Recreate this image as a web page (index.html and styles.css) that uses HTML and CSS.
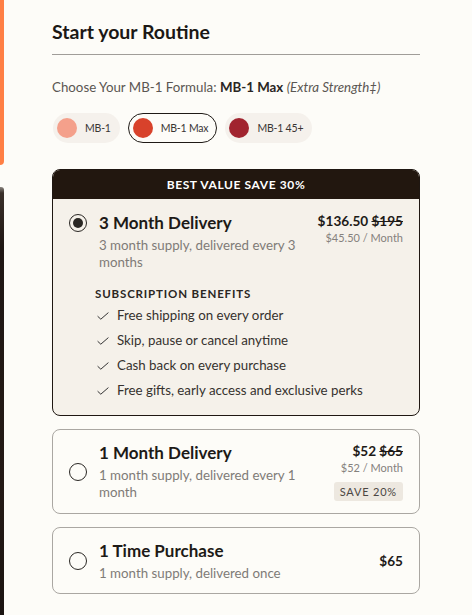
FILE: index.html
```html
<!DOCTYPE html>
<html lang="en">
<head>
<meta charset="utf-8">
<title>Start your Routine</title>
<link rel="stylesheet" href="styles.css">
</head>
<body>
<div class="page">
  <div class="edge">
    <div class="edge-top"></div>
    <div class="edge-bottom"></div>
  </div>
  <main class="panel">
    <h2 class="title">Start your Routine</h2>
    <p class="formula">Choose Your MB-1 Formula: <b>MB-1 Max</b> <i>(Extra Strength‡)</i></p>
    <div class="chips">
      <div class="chip"><span class="dot dot-light"></span><span class="chip-label">MB-1</span></div>
      <div class="chip chip-active"><span class="dot dot-mid"></span><span class="chip-label">MB-1 Max</span></div>
      <div class="chip"><span class="dot dot-dark"></span><span class="chip-label">MB-1 45+</span></div>
    </div>
    <div class="plans">
      <div class="plan plan-selected">
        <div class="plan-banner">BEST VALUE SAVE 30%</div>
        <div class="plan-body plan-body-main">
          <div class="plan-row">
            <span class="radio radio-on"><span class="radio-dot"></span></span>
            <div class="plan-info">
              <div class="plan-name">3 Month Delivery</div>
              <div class="plan-desc">3 month supply, delivered every 3 months</div>
            </div>
            <div class="plan-price">
              <div class="price">$136.50 <s>$195</s></div>
              <div class="per">$45.50 / Month</div>
            </div>
          </div>
          <div class="benefits">
            <div class="benefits-title">SUBSCRIPTION BENEFITS</div>
            <ul class="benefit-list">
              <li class="benefit"><svg class="check" viewBox="0 0 12 8" width="12" height="8"><path d="M0.6 4.2 L3.8 7.2 L11.4 0.6" fill="none" stroke="#333" stroke-width="1"/></svg>Free shipping on every order</li>
              <li class="benefit"><svg class="check" viewBox="0 0 12 8" width="12" height="8"><path d="M0.6 4.2 L3.8 7.2 L11.4 0.6" fill="none" stroke="#333" stroke-width="1"/></svg>Skip, pause or cancel anytime</li>
              <li class="benefit"><svg class="check" viewBox="0 0 12 8" width="12" height="8"><path d="M0.6 4.2 L3.8 7.2 L11.4 0.6" fill="none" stroke="#333" stroke-width="1"/></svg>Cash back on every purchase</li>
              <li class="benefit"><svg class="check" viewBox="0 0 12 8" width="12" height="8"><path d="M0.6 4.2 L3.8 7.2 L11.4 0.6" fill="none" stroke="#333" stroke-width="1"/></svg>Free gifts, early access and exclusive perks</li>
            </ul>
          </div>
        </div>
      </div>

      <div class="plan">
        <div class="plan-body">
          <div class="plan-row plan-row-center">
            <span class="radio"></span>
            <div class="plan-info">
              <div class="plan-name">1 Month Delivery</div>
              <div class="plan-desc">1 month supply, delivered every 1 month</div>
            </div>
            <div class="plan-price">
              <div class="price">$52 <s>$65</s></div>
              <div class="per">$52 / Month</div>
              <div class="badge">SAVE 20%</div>
            </div>
          </div>
        </div>
      </div>

      <div class="plan">
        <div class="plan-body plan-body-short">
          <div class="plan-row plan-row-center">
            <span class="radio"></span>
            <div class="plan-info">
              <div class="plan-name">1 Time Purchase</div>
              <div class="plan-desc">1 month supply, delivered once</div>
            </div>
            <div class="plan-price">
              <div class="price">$65</div>
            </div>
          </div>
        </div>
      </div>
    </div>
  </main>
</div>
</body>
</html>
```

FILE: styles.css
```css
* { box-sizing: border-box; }

html, body {
  margin: 0;
  padding: 0;
  background: #fdfcf8;
}

body {
  font-family: Lato, "Liberation Sans", sans-serif;
  color: #1d1a17;
}

.page {
  display: flex;
  height: 615px;
  overflow: hidden;
}

.edge {
  width: 4px;
  display: flex;
  flex-direction: column;
  flex-shrink: 0;
}

.edge-top {
  height: 165px;
  background: #ff7f45;
  border-bottom-right-radius: 4px;
}

.edge-bottom {
  flex: 1;
  margin-top: 22px;
  background: linear-gradient(180deg, #8a8580 0px, #3a302a 6px, #1f1714 60px, #241a16 300px, #1b1411 100%);
  border-top-right-radius: 3px;
}

.panel {
  margin-left: 48px;
  width: 368px;
  padding-top: 20px;
}

.title {
  margin: 0;
  font-size: 19.5px;
  line-height: 24px;
  font-weight: 700;
  color: #1b1815;
  padding-bottom: 10px;
  border-bottom: 1px solid #a09d99;
}

.formula {
  margin: 23px 0 0;
  font-size: 13.3px;
  line-height: 18px;
  color: #5a5652;
}

.formula b {
  font-weight: 700;
  color: #2a2623;
}

.formula i {
  color: #5a5652;
}

.chips {
  display: flex;
  gap: 8px;
  margin-top: 17px;
  padding-left: 1px;
}

.chip {
  display: flex;
  align-items: center;
  gap: 8px;
  height: 30px;
  padding: 0 8px 0 3px;
  border: 1px solid transparent;
  border-radius: 15px;
  background: #f5f1ec;
}

.chip-active {
  border-color: #1f1a16;
  background: #fdfcf8;
  padding-left: 4px;
}

.dot {
  width: 20px;
  height: 20px;
  border-radius: 50%;
}

.dot-light { background: #f4a08b; }
.dot-mid { background: #d8422b; }
.dot-dark { background: #a1242f; }

.chip-label {
  font-size: 10.5px;
  letter-spacing: -0.2px;
  color: #3a3633;
}

.plans {
  margin-top: 26px;
  display: flex;
  flex-direction: column;
  gap: 13px;
}

.plan {
  border: 1px solid #aaa7a2;
  border-radius: 8px;
  overflow: hidden;
}

.plan-selected {
  border-color: #1f1712;
  background: #f5f1ea;
}

.plan-banner {
  height: 30px;
  margin: -1px -1px 0;
  background: #22170f;
  color: #ffffff;
  font-size: 12px;
  font-weight: 700;
  letter-spacing: 0.6px;
  display: flex;
  align-items: center;
  justify-content: center;
}

.plan-body {
  padding: 12px 16px 12px;
}

.plan-body-main {
  padding: 13px 16px 13px;
}

.plan-body-short {
  padding: 12px 16px 11px;
}

.plan-row {
  display: flex;
  align-items: flex-start;
}

.plan-row-center {
  align-items: center;
}

.radio {
  flex-shrink: 0;
  width: 18px;
  height: 18px;
  border: 1px solid #2a2724;
  border-radius: 50%;
  display: flex;
  align-items: center;
  justify-content: center;
  margin-right: 12px;
}

.radio-on {
  border-width: 1.5px;
  margin-top: 2px;
}

.radio-dot {
  width: 10px;
  height: 10px;
  border-radius: 50%;
  background: #2a2724;
}

.plan-info {
  flex: 1;
  min-width: 0;
  padding-right: 16px;
}

.plan-name {
  font-size: 17px;
  line-height: 22px;
  font-weight: 700;
  color: #1d1a17;
}

.plan-desc {
  margin-top: 3px;
  font-size: 13.3px;
  line-height: 17px;
  color: #7f7b77;
}

.plan-price {
  display: flex;
  flex-direction: column;
  align-items: flex-end;
  flex-shrink: 0;
}

.price {
  font-size: 13.6px;
  line-height: 18px;
  font-weight: 700;
  color: #1d1a17;
}

.price s {
  text-decoration-thickness: 1px;
}

.per {
  font-size: 11px;
  line-height: 16px;
  color: #85817d;
}

.badge {
  margin-top: 6px;
  height: 19px;
  padding: 0 6px;
  display: flex;
  align-items: center;
  background: #ede8e0;
  border-radius: 3px;
  font-size: 11px;
  letter-spacing: 0.8px;
  color: #4a4642;
}

.benefits {
  margin-top: 16px;
  padding-left: 26px;
}

.benefits-title {
  font-size: 11.5px;
  line-height: 14px;
  font-weight: 700;
  letter-spacing: 0.85px;
  color: #2a2623;
}

.benefit-list {
  list-style: none;
  margin: 1px 0 0;
  padding: 0;
}

.benefit {
  display: flex;
  align-items: center;
  height: 25px;
  font-size: 13.3px;
  color: #35312e;
}

.check {
  margin-left: 2px;
  margin-right: 8px;
  margin-top: 3px;
  flex-shrink: 0;
}
```
